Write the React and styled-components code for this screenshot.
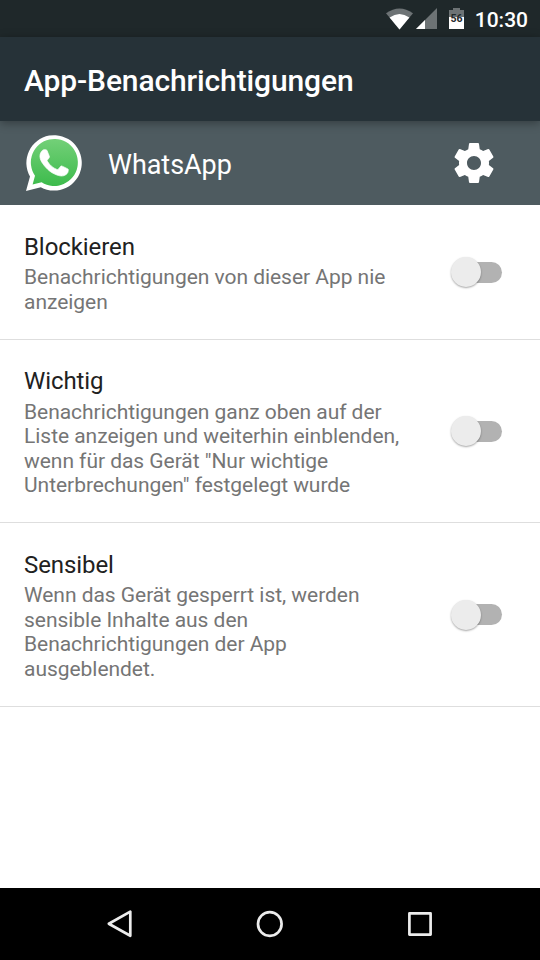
import React, { useState } from 'react';
import styled, { createGlobalStyle } from 'styled-components';

const GlobalStyle = createGlobalStyle`
    * { box-sizing: border-box; }
    body { margin: 0; background-color: white; font-family: Roboto, "Liberation Sans", sans-serif; }
`

const Screen = styled.div`
    display: flex; flex-direction: column; width: 540px; height: 960px; overflow: hidden;
    background-color: white;
`

const StatusBar = styled.div`
    display: flex; justify-content: flex-end; align-items: center; flex: none;
    height: 37px; padding-right: 12px;
    background-color: #1f282a; color: white;
`

const Clock = styled.span`
    margin-left: 9px; padding-top: 2px;
    font-size: 21px; font-weight: 500; line-height: 24px;
`

const ToolBar = styled.header`
    display: flex; align-items: center; flex: none; z-index: 1;
    height: 84px; padding: 3px 24px 0;
    background-color: #263238; color: white;
    box-shadow: 0 2px 9px rgba(0, 0, 0, 0.35);
`

const PageTitle = styled.h1`
    margin: 0; font-size: 30px; font-weight: 500; line-height: 36px; letter-spacing: -0.12px;
`

const AppBar = styled.div`
    display: flex; align-items: center; flex: none;
    height: 84px; padding: 0 42px 0 24px;
    background-color: #4e5b60; color: white;
`

const AppName = styled.span`
    flex: 1; margin-left: 24px; padding-top: 4px;
    font-size: 27px; line-height: 32px; letter-spacing: -0.05px;
`

const IconButton = styled.button`
    display: flex; padding: 0; border: 0; background: none; color: white;
`

const List = styled.main`
    flex: 1;
`

const Row = styled.div`
    display: flex; align-items: center; justify-content: space-between;
    height: ${props => props.$height}px; padding: 0 38px 0 24px;
    border-bottom: 1px solid #dedede;
`

const Texts = styled.div`
    width: 390px; padding-top: 2.5px;
`

const RowTitle = styled.div`
    margin-bottom: 3.5px;
    font-size: 24px; line-height: 29px; letter-spacing: -0.08px; color: #212121;
`

const Summary = styled.div`
    font-size: 21px; line-height: 24.5px; letter-spacing: -0.04px; color: #757575; white-space: pre-line;
`

const Switch = styled.button`
    display: flex; align-items: center; justify-content: flex-end;
    width: 49px; height: 32px; padding: 0; border: 0; background: none;
`

const Track = styled.span`
    display: flex; align-items: center; width: 42px; height: 21px; border-radius: 11px;
    background-color: ${props => props.$on ? "#80cbc4" : "#b2b2b2"};
`

const Thumb = styled.span`
    flex: none; width: 30px; height: 30px; border-radius: 50%;
    margin-left: ${props => props.$on ? 16 : -9}px;
    background-color: ${props => props.$on ? "#009688" : "#ececec"};
    box-shadow: 0 1px 2px rgba(0, 0, 0, 0.35);
`

const NavBar = styled.nav`
    display: flex; justify-content: center; gap: 102px; align-items: center; flex: none;
    height: 72px; background-color: black;
`

const settings = [
    { id: "block", title: "Blockieren", height: 135, summary: "Benachrichtigungen von dieser App nie\nanzeigen" },
    { id: "priority", title: "Wichtig", height: 183, summary: "Benachrichtigungen ganz oben auf der\nListe anzeigen und weiterhin einblenden,\nwenn für das Gerät \"Nur wichtige\nUnterbrechungen\" festgelegt wurde" },
    { id: "sensitive", title: "Sensibel", height: 184, summary: "Wenn das Gerät gesperrt ist, werden\nsensible Inhalte aus den\nBenachrichtigungen der App\nausgeblendet." },
];

function StatusIcons () {
    return (
        <svg width="82" height="37" viewBox="384 0 82 37">
            <path d="M386 13.2 Q399.5 3.8 413 13.2 L399.5 29.5 Z" fill="#6d7375" />
            <path d="M389.6 17.5 Q399.5 10.3 409.4 17.5 L399.5 29.5 Z" fill="white" />
            <path d="M437 8 V29 H416 Z" fill="#6d7375" />
            <path d="M425 20 V29 H416 Z" fill="white" />
            <path d="M449 10 H453 V8 H460 V10 H464 V17 H449 Z" fill="#6d7375" />
            <path d="M449 17 H464 V29 H449 Z" fill="white" />
            <text x="456.5" y="22.3" textAnchor="middle" fontSize="10.5" fontWeight="700" fill="#1f282a">56</text>
        </svg>
    );
}

function WhatsAppLogo () {
    return (
        <svg width="60" height="60" viewBox="24 133 60 60">
            <defs>
                <linearGradient id="green" x1="0" y1="0" x2="0" y2="1">
                    <stop offset="0" stopColor="#73d078" />
                    <stop offset="1" stopColor="#3dbb4c" />
                </linearGradient>
            </defs>
            <path d="M26 191 L30 176.6 A27.7 27.7 0 1 1 40.8 187.2 Z" fill="white" />
            <path d="M32.6 184.4 L35 175.8 A23.5 23.5 0 1 1 41.6 182.2 Z" fill="url(#green)" />
            <path transform="translate(25.8 134.6) scale(2.35)" d="M17.472 14.382c-.297-.149-1.758-.867-2.03-.967-.273-.099-.471-.148-.67.15-.197.297-.767.966-.94 1.164-.173.199-.347.223-.644.075-.297-.15-1.255-.463-2.39-1.475-.883-.788-1.48-1.761-1.653-2.059-.173-.297-.018-.458.13-.606.134-.133.298-.347.446-.52.149-.174.198-.298.298-.497.099-.198.05-.371-.025-.52-.075-.149-.669-1.612-.916-2.207-.242-.579-.487-.5-.669-.51-.173-.008-.371-.01-.57-.01-.198 0-.52.074-.792.372-.272.297-1.04 1.016-1.04 2.479 0 1.462 1.065 2.875 1.213 3.074.149.198 2.096 3.2 5.077 4.487.709.306 1.262.489 1.694.625.712.227 1.36.195 1.871.118.571-.085 1.758-.719 2.006-1.413.248-.694.248-1.289.173-1.413-.074-.124-.272-.198-.57-.347" fill="white" stroke="white" strokeWidth="0.3" />
        </svg>
    );
}

function GearIcon () {
    return (
        <svg width="48" height="48" viewBox="0 0 24 24" fill="currentColor">
            <path d="M19.43 12.98c.04-.32.07-.64.07-.98s-.03-.66-.07-.98l2.11-1.65c.19-.15.24-.42.12-.64l-2-3.46c-.12-.22-.39-.3-.61-.22l-2.49 1c-.52-.4-1.08-.73-1.69-.98l-.38-2.65C14.46 2.18 14.25 2 14 2h-4c-.25 0-.46.18-.49.42l-.38 2.65c-.61.25-1.17.59-1.69.98l-2.49-1c-.23-.09-.49 0-.61.22l-2 3.46c-.13.22-.07.49.12.64l2.11 1.65c-.04.32-.07.65-.07.98s.03.66.07.98l-2.11 1.65c-.19.15-.24.42-.12.64l2 3.46c.12.22.39.3.61.22l2.49-1c.52.4 1.08.73 1.69.98l.38 2.65c.03.24.24.42.49.42h4c.25 0 .46-.18.49-.42l.38-2.65c.61-.25 1.17-.59 1.69-.98l2.49 1c.23.09.49 0 .61-.22l2-3.46c.12-.22.07-.49-.12-.64l-2.11-1.65zM12 15.5c-1.93 0-3.5-1.57-3.5-3.5s1.57-3.5 3.5-3.5 3.5 1.57 3.5 3.5-1.57 3.5-3.5 3.5z" />
        </svg>
    );
}

function NavIcon ({ children }) {
    return (
        <svg width="48" height="48" viewBox="0 0 48 48" fill="none" stroke="#ececec" strokeWidth="2.7" strokeLinejoin="round">
            {children}
        </svg>
    );
}

function SettingRow ({ item }) {
    const [on, setOn] = useState(false);

    return (
        <Row $height={item.height}>
            <Texts>
                <RowTitle>{item.title}</RowTitle>
                <Summary>{item.summary}</Summary>
            </Texts>
            <Switch role="switch" aria-checked={on} aria-label={item.title} onClick={() => setOn(!on)}>
                <Track $on={on}><Thumb $on={on} /></Track>
            </Switch>
        </Row>
    );
}

function App () {
    return (
        <Screen>
            <GlobalStyle />
            <StatusBar>
                <StatusIcons />
                <Clock>10:30</Clock>
            </StatusBar>
            <ToolBar>
                <PageTitle>App-Benachrichtigungen</PageTitle>
            </ToolBar>
            <AppBar>
                <WhatsAppLogo />
                <AppName>WhatsApp</AppName>
                <IconButton aria-label="Einstellungen"><GearIcon /></IconButton>
            </AppBar>
            <List>
                {settings.map(item => <SettingRow key={item.id} item={item} />)}
            </List>
            <NavBar>
                <NavIcon><path d="M12.8 23.7 L34.3 11.6 V35.8 Z" /></NavIcon>
                <NavIcon><circle cx="23.8" cy="24" r="11.8" /></NavIcon>
                <NavIcon><rect x="13.4" y="13.4" width="21.2" height="21.2" /></NavIcon>
            </NavBar>
        </Screen>
    );
}

export default App;
